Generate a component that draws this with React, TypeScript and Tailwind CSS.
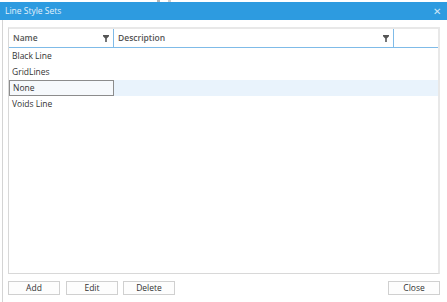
import React from "react";

const Funnel = () => (
  <svg width="6" height="7" viewBox="0 0 6 7" className="block">
    <path d="M0 0H6V1.2L3.8 3.4V7H2.2V3.4L0 1.2Z" fill="#555" />
  </svg>
);

const rows = ["Black Line", "GridLines", "None", "Voids Line"];

export default function App() {
  return (
    <div
      className="w-[447px] h-[302px] bg-white overflow-hidden flex flex-col text-[8.5px] text-[#222]"
      style={{ fontFamily: '"Open Sans", "Noto Sans", sans-serif' }}
    >
      <div className="h-[2px] flex">
        <div className="w-[157px]" />
        <div className="w-[3px] bg-[#b5b5b5]" />
        <div className="w-[8px]" />
        <div className="w-[3px] bg-[#cfcfcf]" />
      </div>
      <div className="h-[18px] bg-[#2d9be0] flex items-center justify-between pl-[5px] pr-[6px]">
        <span className="text-[#e2f0fb] text-[8.5px] leading-none">Line Style Sets</span>
        <span className="text-[#cfe6f7] text-[10px] leading-none">✕</span>
      </div>
      <div className="flex-1 flex flex-col border-l border-[#d4d4d4] ml-[2px] pl-[5px] pr-[7px] pt-[7px]">
        <div className="h-[247px] border border-[#d8d8d8] border-t-2 border-t-[#e8e8e8] border-r-2 border-r-[#e8e8e8] flex flex-col">
          <div className="h-[19px] flex border-b border-[#7fbbe8]">
            <div className="w-[105px] flex items-center justify-between pl-[4px] pr-[4px] border-r border-[#7fbbe8]">
              <span className="font-semibold text-[#555]">Name</span>
              <Funnel />
            </div>
            <div className="w-[280px] flex items-center justify-between pl-[4px] pr-[4px] border-r border-[#7fbbe8]">
              <span className="font-semibold text-[#555]">Description</span>
              <Funnel />
            </div>
            <div className="flex-1" />
          </div>
          {rows.map((r, i) => (
            <div key={r} className={`h-[16px] flex ${i === 2 ? "bg-[#e9f3fc]" : ""}`}>
              <div
                className={`w-[105px] flex items-center pl-[3px] ${
                  i === 2 ? "border border-[#8c8c8c] bg-[#f6f9fc] pl-[2px]" : ""
                }`}
              >
                <span className="text-[#333]">{r}</span>
              </div>
              <div className="flex-1" />
            </div>
          ))}
        </div>
        <div className="mt-[7px] flex items-center">
          <button className="w-[52px] h-[14px] border border-[#d0d0d0] bg-[#fdfdfd] text-[8.5px] leading-none text-[#333] flex items-center justify-center">
            Add
          </button>
          <button className="ml-[6px] w-[52px] h-[14px] border border-[#d0d0d0] bg-[#fdfdfd] text-[8.5px] leading-none text-[#333] flex items-center justify-center">
            Edit
          </button>
          <button className="ml-[5px] w-[52px] h-[14px] border border-[#d0d0d0] bg-[#fdfdfd] text-[8.5px] leading-none text-[#333] flex items-center justify-center">
            Delete
          </button>
          <div className="flex-1" />
          <button className="w-[52px] h-[14px] border border-[#d0d0d0] bg-[#fdfdfd] text-[8.5px] leading-none text-[#333] flex items-center justify-center">
            Close
          </button>
        </div>
      </div>
    </div>
  );
}
